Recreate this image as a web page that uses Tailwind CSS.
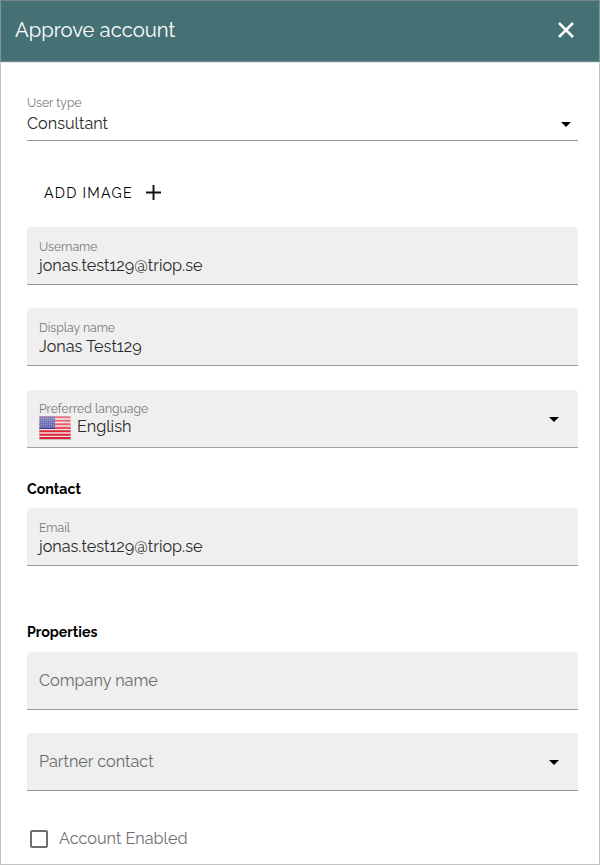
<!DOCTYPE html>
<html lang="en">
<head>
<meta charset="utf-8">
<title>Approve account</title>
<script src="https://cdn.jsdelivr.net/npm/@tailwindcss/browser@4"></script>
</head>
<body class="bg-white">
<main class="flex h-[865px] w-[600px] flex-col border border-t-0 border-[#c3c3c3] bg-white font-['Raleway','Lato',sans-serif] text-[16.2px] text-[#2a2a2a]">
  <header class="-mx-px flex h-[62px] shrink-0 items-center justify-between border-x border-t border-b border-x-[#7f9698] border-t-[#758486] border-b-[#6f8f92] bg-[#457074] pr-[25px] pl-[14px] shadow-[0_1px_0_#dde3e4]">
    <h1 class="relative -top-px text-[20.25px] leading-6 text-white">Approve account</h1>
    <svg class="relative -top-[1.5px] size-4" viewBox="0 0 16 16" fill="none" stroke="#fff" stroke-width="2.5"><path d="M1 1 15 15M15 1 1 15"/></svg>
  </header>

  <form class="flex flex-col pr-[21px] pl-[26px]">
    <div class="mt-[33px] flex h-[46px] flex-col border-b border-[#999]">
      <label class="mt-px text-[12.2px] leading-[14px] text-[#7a7a7a]">User type</label>
      <div class="mt-[4px] flex items-center justify-between pr-[7px] leading-5">
        <span>Consultant</span>
        <svg class="h-[5px] w-[10px]" viewBox="0 0 10 5"><path d="M0 0H10L5 5Z"/></svg>
      </div>
    </div>

    <button type="button" class="mt-[42px] flex h-[20px] items-center gap-[13px] pl-[17px] text-[14.2px] text-black">
      <span class="pt-[2px] tracking-[1.27px]">ADD IMAGE</span>
      <svg class="-mt-px size-[15px]" viewBox="0 0 15 15" stroke="#111" stroke-width="1.9"><path d="M7.5 0V15M0 7.5H15"/></svg>
    </button>

    <div class="mt-[24px] flex h-[58px] flex-col rounded-t-[4px] border-b border-[#999] bg-[#efefef] px-3 pt-[13px]">
      <label class="text-[12.2px] leading-[14px] text-[#7a7a7a]">Username</label>
      <span class="mt-[2px] leading-5">jonas.test129@triop.se</span>
    </div>

    <div class="mt-[23px] flex h-[58px] flex-col rounded-t-[4px] border-b border-[#999] bg-[#efefef] px-3 pt-[13px]">
      <label class="text-[12.2px] leading-[14px] text-[#7a7a7a]">Display name</label>
      <span class="mt-[2px] leading-5">Jonas Test129</span>
    </div>

    <div class="mt-[24px] flex h-[58px] items-start justify-between rounded-t-[4px] border-b border-[#a0a0a0] bg-[#efefef] px-3 pt-[12px]">
      <div class="flex flex-col">
        <label class="text-[12.2px] leading-[14px] text-[#7a7a7a]">Preferred language</label>
        <div class="flex items-start gap-[6px]">
          <svg class="h-[24px] w-[32px]" viewBox="0 0 32 24">
            <defs>
              <linearGradient id="shine" x2="0" y2="1"><stop stop-color="#fff" stop-opacity=".4"/><stop offset="1" stop-color="#fff" stop-opacity=".2"/></linearGradient>
            </defs>
            <rect width="32" height="24" rx="1" fill="#c9bcbc"/>
            <rect x=".5" y=".5" width="31" height="22.5" fill="#f7dfe1"/>
            <path d="M.5 1.2h31M.5 4.7h31M.5 8.2h31M.5 11.7h31M.5 15.2h31M.5 18.7h31M.5 22h31" stroke="#d92637" stroke-width="2.1"/>
            <rect x=".5" y=".5" width="15.5" height="12.5" fill="#3c3f98"/>
            <path d="M2 2.5h13M2 4.5h13M2 6.5h13M2 8.5h13M2 10.5h13" stroke="#6c70b4" stroke-width="1" stroke-dasharray="1 1"/>
            <path d="M0 0H32V12H0Z" fill="url(#shine)"/>
          </svg>
          <span class="mt-px leading-5">English</span>
        </div>
      </div>
      <svg class="mt-[15px] mr-[7px] h-[5px] w-[10px]" viewBox="0 0 10 5"><path d="M0 0H10L5 5Z"/></svg>
    </div>

    <h2 class="mt-[31px] text-[14.2px] leading-5 font-bold text-black">Contact</h2>
    <div class="mt-[9px] flex h-[58px] flex-col rounded-t-[4px] border-b border-[#999] bg-[#efefef] px-3 pt-[13px]">
      <label class="text-[12.2px] leading-[14px] text-[#7a7a7a]">Email</label>
      <span class="mt-[2px] leading-5">jonas.test129@triop.se</span>
    </div>

    <h2 class="mt-[56px] text-[14.2px] leading-5 font-bold text-black">Properties</h2>
    <div class="mt-[10px] flex h-[58px] items-center rounded-t-[4px] border-b border-[#999] bg-[#efefef] px-3 text-[#6c6c6c]">
      <span class="pt-[2px]">Company name</span>
    </div>
    <div class="mt-[23px] flex h-[58px] items-center justify-between rounded-t-[4px] border-b border-[#999] bg-[#efefef] pr-[19px] pl-3 text-[#6c6c6c]">
      <span class="pt-[2px]">Partner contact</span>
      <svg class="mt-[2px] h-[5px] w-[10px]" viewBox="0 0 10 5"><path d="M0 0H10L5 5Z"/></svg>
    </div>

    <label class="mt-[36px] flex h-[24px] items-center gap-[11px] pl-[3px] text-[#707070]">
      <span class="size-[18px] rounded-[2px] border-2 border-[#6f6f6f]"></span>
      <span>Account Enabled</span>
    </label>
  </form>
</main>
</body>
</html>
